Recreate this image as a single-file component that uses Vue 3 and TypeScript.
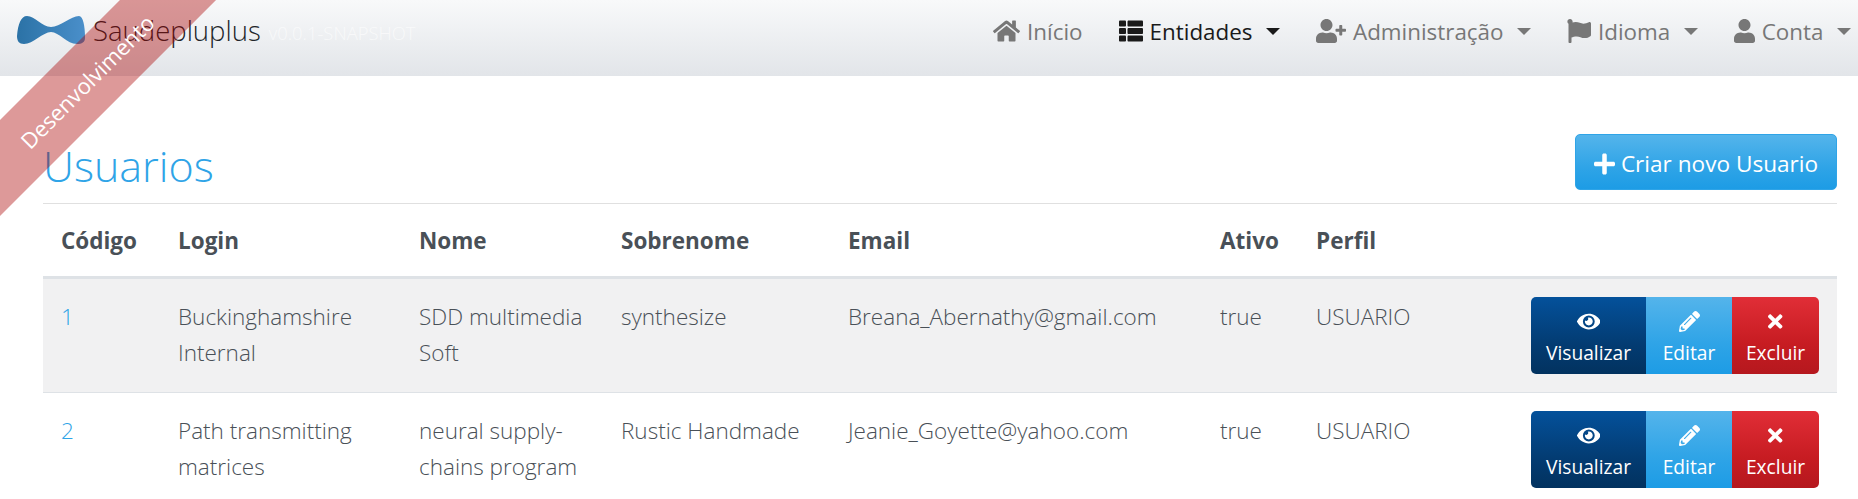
<template>
  <div class="page">
    <div class="ribbon"><span>Desenvolvimento</span></div>

    <nav class="navbar">
      <a class="brand">
        <svg class="logo" viewBox="0 0 68 28">
          <defs>
            <linearGradient id="bow" x1="0" x2="1" y1="0" y2="0">
              <stop offset="0" stop-color="#2b72a6" />
              <stop offset="1" stop-color="#4a8fca" />
            </linearGradient>
          </defs>
          <path
            fill="url(#bow)"
            d="M0 20C1 8 4 0 10 0C18 0 25 11 34 11C43 11 54 0 62 0C66 0 68 10 68 22C68 26 65 28 60 28C50 28 42 16 34 16C26 16 16 28 7 28C2 28 0 25 0 20Z"
          />
        </svg>
        <span class="brand-title">Saudepluplus</span>
        <span class="brand-version">v0.0.1-SNAPSHOT</span>
      </a>
      <ul class="nav">
        <li v-for="item in navItems" :key="item.label" class="nav-link" :class="{ active: item.active }">
          <svg class="nav-icon" :viewBox="icons[item.icon].box">
            <path fill="currentColor" :d="icons[item.icon].d" />
          </svg>
          <span>{{ item.label }}</span>
          <i v-if="item.caret" class="caret"></i>
        </li>
      </ul>
    </nav>

    <main class="content">
      <div class="title-row">
        <h2 class="title">Usuarios</h2>
        <button class="btn btn-primary create">
          <svg class="plus" :viewBox="icons.plus.box"><path fill="currentColor" :d="icons.plus.d" /></svg>
          <span>Criar novo Usuario</span>
        </button>
      </div>

      <table class="table">
        <colgroup>
          <col v-for="w in colWidths" :key="w" :style="{ width: w + 'px' }" />
        </colgroup>
        <thead>
          <tr>
            <th v-for="h in headers" :key="h">{{ h }}</th>
            <th></th>
          </tr>
        </thead>
        <tbody>
          <tr v-for="u in users" :key="u.id">
            <td><a class="link">{{ u.id }}</a></td>
            <td>{{ u.login }}</td>
            <td>{{ u.nome }}</td>
            <td>{{ u.sobrenome }}</td>
            <td>{{ u.email }}</td>
            <td>{{ u.ativo }}</td>
            <td>{{ u.perfil }}</td>
            <td class="actions">
              <div class="btn-group">
                <button v-for="a in actions" :key="a.label" class="btn action" :class="a.cls">
                  <svg class="action-icon" :viewBox="icons[a.icon].box">
                    <path fill="currentColor" :d="icons[a.icon].d" />
                  </svg>
                  <span>{{ a.label }}</span>
                </button>
              </div>
            </td>
          </tr>
        </tbody>
      </table>
    </main>
  </div>
</template>

<script setup lang="ts">
const icons: Record<string, { box: string; d: string }> = {
  home: {
    box: "0 0 576 512",
    d: "M280.37 148.26L96 300.11V464a16 16 0 0 0 16 16l112.06-.29a16 16 0 0 0 15.92-16V368a16 16 0 0 1 16-16h64a16 16 0 0 1 16 16v95.64a16 16 0 0 0 16 16.05L464 480a16 16 0 0 0 16-16V300L295.67 148.26a12.19 12.19 0 0 0-15.3 0zM571.6 251.47L488 182.56V44.05a12 12 0 0 0-12-12h-56a12 12 0 0 0-12 12v72.61L318.47 43a48 48 0 0 0-61 0L4.34 251.47a12 12 0 0 0-1.6 16.9l25.5 31A12 12 0 0 0 45.15 301l235.22-193.74a12.19 12.19 0 0 1 15.3 0L530.9 301a12 12 0 0 0 16.9-1.6l25.5-31a12 12 0 0 0-1.7-16.93z",
  },
  list: {
    box: "0 0 512 512",
    d: "M149.333 216v80c0 13.255-10.745 24-24 24H24c-13.255 0-24-10.745-24-24v-80c0-13.255 10.745-24 24-24h101.333c13.255 0 24 10.745 24 24zM0 376v80c0 13.255 10.745 24 24 24h101.333c13.255 0 24-10.745 24-24v-80c0-13.255-10.745-24-24-24H24c-13.255 0-24 10.745-24 24zM125.333 32H24C10.745 32 0 42.745 0 56v80c0 13.255 10.745 24 24 24h101.333c13.255 0 24-10.745 24-24V56c0-13.255-10.745-24-24-24zm80 448H488c13.255 0 24-10.745 24-24v-80c0-13.255-10.745-24-24-24H205.333c-13.255 0-24 10.745-24 24v80c0 13.255 10.745 24 24 24zm-24-424v80c0 13.255 10.745 24 24 24H488c13.255 0 24-10.745 24-24V56c0-13.255-10.745-24-24-24H205.333c-13.255 0-24 10.745-24 24zm24 264H488c13.255 0 24-10.745 24-24v-80c0-13.255-10.745-24-24-24H205.333c-13.255 0-24 10.745-24 24v80c0 13.255 10.745 24 24 24z",
  },
  userPlus: {
    box: "0 0 640 512",
    d: "M624 208h-64v-64c0-8.8-7.2-16-16-16h-32c-8.8 0-16 7.2-16 16v64h-64c-8.8 0-16 7.2-16 16v32c0 8.8 7.2 16 16 16h64v64c0 8.8 7.2 16 16 16h32c8.8 0 16-7.2 16-16v-64h64c8.8 0 16-7.2 16-16v-32c0-8.8-7.2-16-16-16zm-400 48c70.7 0 128-57.3 128-128S294.7 0 224 0 96 57.3 96 128s57.3 128 128 128zm89.6 32h-16.7c-22.2 10.2-46.9 16-72.9 16s-50.6-5.8-72.9-16h-16.7C60.2 288 0 348.2 0 422.4V464c0 26.5 21.5 48 48 48h352c26.5 0 48-21.5 48-48v-41.6c0-74.2-60.2-134.4-134.4-134.4z",
  },
  user: {
    box: "0 0 448 512",
    d: "M224 256c70.7 0 128-57.3 128-128S294.7 0 224 0 96 57.3 96 128s57.3 128 128 128zm89.6 32h-16.7c-22.2 10.2-46.9 16-72.9 16s-50.6-5.8-72.9-16h-16.7C60.2 288 0 348.2 0 422.4V464c0 26.5 21.5 48 48 48h352c26.5 0 48-21.5 48-48v-41.6c0-74.2-60.2-134.4-134.4-134.4z",
  },
  flag: {
    box: "0 0 512 512",
    d: "M349.565 98.783C295.978 98.783 251.721 64 184.348 64c-24.955 0-47.309 4.384-68.045 12.013a55.947 55.947 0 0 0 3.586-23.562C118.117 24.015 94.806 1.206 66.338.048 34.345-1.254 8 24.296 8 56c0 19.026 9.497 35.825 24 45.945V488c0 13.255 10.745 24 24 24h16c13.255 0 24-10.745 24-24v-94.4c28.311-12.064 63.582-22.122 114.435-22.122 53.588 0 97.844 34.783 165.217 34.783 48.169 0 86.667-16.294 122.505-40.858C506.84 359.452 512 349.571 512 339.045v-243.1c0-23.393-24.269-38.87-45.485-29.016-34.338 15.948-76.454 31.854-116.95 31.854z",
  },
  eye: {
    box: "0 0 576 512",
    d: "M572.52 241.4C518.29 135.59 410.93 64 288 64S57.68 135.64 3.48 241.41a32.35 32.35 0 0 0 0 29.19C57.71 376.41 165.07 448 288 448s230.32-71.64 284.52-177.41a32.35 32.35 0 0 0 0-29.19zM288 400a144 144 0 1 1 144-144 143.93 143.93 0 0 1-144 144zm0-240a95.31 95.31 0 0 0-25.31 3.79 47.85 47.85 0 0 1-66.9 66.9A95.78 95.78 0 1 0 288 160z",
  },
  pencil: {
    box: "0 0 512 512",
    d: "M497.9 142.1l-46.1 46.1c-4.7 4.7-12.3 4.7-17 0l-111-111c-4.7-4.7-4.7-12.3 0-17l46.1-46.1c18.7-18.7 49.1-18.7 67.9 0l60.1 60.1c18.8 18.7 18.8 49.1 0 67.9zM284.2 99.8L21.6 362.4.4 483.9c-2.9 16.4 11.4 30.6 27.8 27.8l121.5-21.3 262.6-262.6c4.7-4.7 4.7-12.3 0-17l-111-111c-4.8-4.7-12.4-4.7-17.1 0zM124.1 339.9c-5.5-5.5-5.5-14.3 0-19.8l154-154c5.5-5.5 14.3-5.5 19.8 0s5.5 14.3 0 19.8l-154 154c-5.5 5.5-14.3 5.5-19.8 0zM88 424h48v36.3l-64.5 11.3-31.1-31.1L51.7 376H88v48z",
  },
  times: {
    box: "0 0 352 512",
    d: "M242.72 256l100.07-100.07c12.28-12.28 12.28-32.19 0-44.48l-22.24-22.24c-12.28-12.28-32.19-12.28-44.48 0L176 189.28 75.93 89.21c-12.28-12.28-32.19-12.28-44.48 0L9.21 111.45c-12.28 12.28-12.28 32.19 0 44.48L109.28 256 9.21 356.07c-12.28 12.28-12.28 32.19 0 44.48l22.24 22.24c12.28 12.28 32.2 12.28 44.48 0L176 322.72l100.07 100.07c12.28 12.28 32.2 12.28 44.48 0l22.24-22.24c12.28-12.28 12.28-32.19 0-44.48L242.72 256z",
  },
  plus: {
    box: "0 0 448 512",
    d: "M416 208H272V64c0-17.67-14.33-32-32-32h-32c-17.67 0-32 14.33-32 32v144H32c-17.67 0-32 14.33-32 32v32c0 17.67 14.33 32 32 32h144v144c0 17.67 14.33 32 32 32h32c17.67 0 32-14.33 32-32V304h144c17.67 0 32-14.33 32-32v-32c0-17.67-14.33-32-32-32z",
  },
};

const navItems = [
  { label: "Início", icon: "home", caret: false, active: false },
  { label: "Entidades", icon: "list", caret: true, active: true },
  { label: "Administração", icon: "userPlus", caret: true, active: false },
  { label: "Idioma", icon: "flag", caret: true, active: false },
  { label: "Conta", icon: "user", caret: true, active: false },
];

const headers = ["Código", "Login", "Nome", "Sobrenome", "Email", "Ativo", "Perfil"];
const colWidths = [117, 241, 202, 227, 372, 96, 216, 323];

const users = [
  {
    id: 1,
    login: "Buckinghamshire Internal",
    nome: "SDD multimedia Soft",
    sobrenome: "synthesize",
    email: "Breana_Abernathy@gmail.com",
    ativo: "true",
    perfil: "USUARIO",
  },
  {
    id: 2,
    login: "Path transmitting matrices",
    nome: "neural supply-chains program",
    sobrenome: "Rustic Handmade",
    email: "Jeanie_Goyette@yahoo.com",
    ativo: "true",
    perfil: "USUARIO",
  },
];

const actions = [
  { label: "Visualizar", icon: "eye", cls: "btn-info" },
  { label: "Editar", icon: "pencil", cls: "btn-primary" },
  { label: "Excluir", icon: "times", cls: "btn-danger" },
];
</script>

<style>
html,
body {
  margin: 0;
  height: 100%;
  overflow: hidden;
  background: #fff;
}
</style>

<style scoped>
.page {
  position: relative;
  height: 499px;
  overflow: hidden;
  font-family: "Open Sans", "Noto Sans", sans-serif;
  font-weight: 300;
  color: #495057;
}

.ribbon {
  position: absolute;
  left: -116px;
  top: 50px;
  z-index: 10;
  width: 400px;
  height: 68px;
  display: flex;
  align-items: center;
  justify-content: center;
  transform: rotate(-45deg);
  background: rgba(170, 0, 0, 0.4);
  color: #fff;
  font-size: 22px;
  font-weight: 400;
  pointer-events: none;
}

.ribbon span {
  position: relative;
  left: 4px;
}

.navbar {
  height: 76px;
  display: flex;
  align-items: flex-start;
  justify-content: space-between;
  padding: 0 7px 0 17px;
  background: linear-gradient(#f8f9fa, #e2e5e9);
}

.brand {
  display: flex;
  align-items: center;
  height: 60px;
}

.logo {
  width: 68px;
  height: 28px;
  margin-right: 8px;
}

.brand-title {
  color: #212529;
  font-size: 27.5px;
  margin-right: 8px;
}

.brand-version {
  color: rgba(255, 255, 255, 0.6);
  font-size: 18.4px;
  margin-top: 5px;
}

.nav {
  display: flex;
  gap: 36px;
  margin: 0;
  padding: 0;
  list-style: none;
}

.nav-link {
  display: flex;
  align-items: center;
  height: 62px;
  color: #777;
  font-size: 22.4px;
  font-weight: 400;
}

.nav-link.active {
  color: #1a1a1a;
}

.nav-icon {
  height: 24px;
  margin-right: 7px;
}

.caret {
  width: 0;
  height: 0;
  margin-left: 13.5px;
  border-top: 7px solid currentColor;
  border-left: 7px solid transparent;
  border-right: 7px solid transparent;
}

.content {
  padding: 58px 21px 0 43px;
}

.title-row {
  display: flex;
  align-items: flex-end;
  justify-content: space-between;
  padding-bottom: 13px;
  border-bottom: 1px solid #e0e0e0;
}

.title {
  position: relative;
  top: 4px;
  margin: 0;
  color: #2fa4e7;
  font-size: 43px;
  font-weight: 300;
  line-height: 56px;
}

.btn {
  border: 1px solid transparent;
  color: #fff;
  font-family: inherit;
  font-weight: 400;
}

.btn-primary {
  background: linear-gradient(#54b4eb, #2fa4e7 60%, #1d9ce5);
}

.btn-info {
  background: linear-gradient(#04519b, #033c73 60%, #02325f);
}

.btn-danger {
  background: linear-gradient(#e12e37, #c71c22 60%, #b5181e);
}

.create {
  display: flex;
  align-items: center;
  justify-content: center;
  width: 262px;
  height: 56px;
  padding: 3px 0 0;
  border-color: #2fa4e7;
  border-radius: 5px;
  font-size: 22.6px;
}

.plus {
  width: 21px;
  height: 24px;
  margin-right: 6px;
}

.table {
  width: 1794px;
  border-collapse: collapse;
  table-layout: fixed;
  font-size: 22.5px;
  line-height: 36px;
}

.table th {
  height: 73px;
  padding: 2px 18px 0;
  box-sizing: border-box;
  border-bottom: 3px solid #dee2e6;
  text-align: left;
  font-weight: 700;
  white-space: nowrap;
}

.table td {
  padding: 20px 18px 16px;
  vertical-align: top;
  border-bottom: 1px solid #dee2e6;
}

.table tbody tr:nth-child(odd) {
  background: #f1f1f2;
}

.link {
  color: #2fa4e7;
}

.table td.actions {
  padding: 18px 18px 18px 0;
  text-align: right;
}

.btn-group {
  display: inline-flex;
  height: 77px;
  border-radius: 5px;
  overflow: hidden;
  vertical-align: top;
}

.action {
  display: flex;
  flex-direction: column;
  align-items: center;
  justify-content: center;
  padding: 0;
  border: 0;
  font-size: 19.2px;
  line-height: 30px;
}

.btn-info {
  width: 115px;
}

.action.btn-primary {
  width: 86px;
}

.btn-danger {
  width: 87px;
}

.action-icon {
  height: 21px;
  margin-top: 9px;
  margin-bottom: 6px;
}
</style>
